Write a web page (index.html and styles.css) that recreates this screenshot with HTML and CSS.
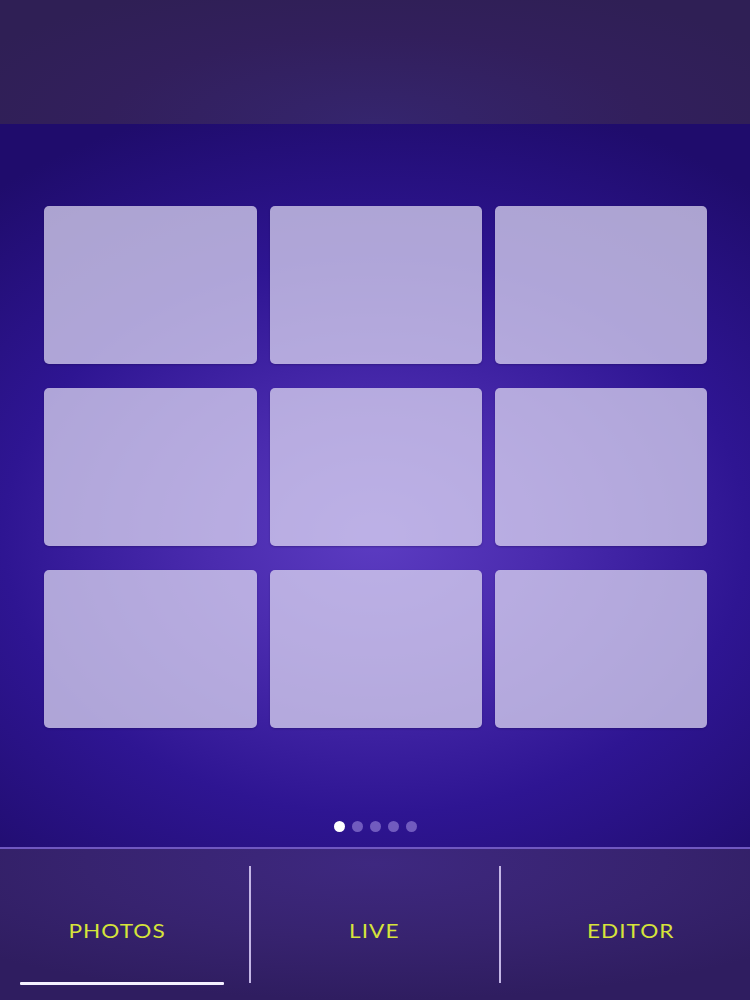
FILE: index.html
```html
<!DOCTYPE html>
<html>
<head>
<meta charset="utf-8">
<link rel="stylesheet" href="styles.css">
</head>
<body>
<div class="app">
  <header class="topbar"></header>
  <main class="stage">
    <div class="grid">
      <div class="tile"></div><div class="tile"></div><div class="tile"></div>
      <div class="tile"></div><div class="tile"></div><div class="tile"></div>
      <div class="tile"></div><div class="tile"></div><div class="tile"></div>
    </div>
    <div class="dots">
      <span class="dot active"></span><span class="dot"></span><span class="dot"></span><span class="dot"></span><span class="dot"></span>
    </div>
  </main>
  <nav class="tabs">
    <div class="tab tab-photos active"><span class="label">PHOTOS</span></div>
    <div class="tab tab-live"><span class="label">LIVE</span></div>
    <div class="tab tab-editor"><span class="label">EDITOR</span></div>
  </nav>
</div>
</body>
</html>
```

FILE: styles.css
```css
* { box-sizing: border-box; }
html, body { margin: 0; padding: 0; }
body { width: 750px; height: 1000px; overflow: hidden; background: #2a1a60; font-family: "Lato", "Noto Sans", sans-serif; }
.app { display: flex; flex-direction: column; width: 750px; height: 1000px; }
.topbar {
  height: 124px; flex: none;
  background: radial-gradient(ellipse 60% 120% at 50% 100%, #35256e 0%, #321f5c 60%, #2f1f55 100%);
}
.stage {
  height: 723px; flex: none;
  display: flex; flex-direction: column; align-items: center;
  background: radial-gradient(ellipse 80% 62% at 50% 57%, #5c3cc2 0%, #4a2bae 28%, #2e1592 62%, #1f0c6c 100%);
  padding-top: 82px;
}
.grid {
  display: grid;
  grid-template-columns: 213px 212px 212px;
  grid-auto-rows: 158px;
  column-gap: 13px;
  row-gap: 24px;
}
.tile {
  background: rgba(226, 222, 244, 0.72);
  border-radius: 5px;
  box-shadow: 0 1px 2px rgba(20, 5, 70, 0.3);
}
.dots { display: flex; gap: 7px; margin-top: 93px; }
.dot { width: 11px; height: 11px; border-radius: 50%; background: rgba(170, 150, 230, 0.55); }
.dot.active { background: #ffffff; }
.tabs {
  flex: 1;
  display: grid;
  grid-template-columns: 249px 250px 251px;
  border-top: 2px solid #7058c0;
  background: radial-gradient(ellipse 70% 90% at 50% 10%, #3e2880 0%, #37236f 55%, #2f1d60 100%);
  padding-top: 17px;
}
.tab {
  position: relative;
  display: flex; align-items: center; justify-content: center;
  height: 117px;
}
.tab-live, .tab-editor { border-left: 2px solid #c4b6e6; }
.label {
  color: #d6e43a;
  font-size: 20px;
  letter-spacing: 0.9px;
  transform: scaleX(1.13);
  position: relative; top: 5px;
}
.tab-photos .label { left: -7px; }
.tab-live .label { left: -1px; }
.tab-editor .label { left: 5px; }
.tab.active::after {
  content: "";
  position: absolute;
  left: 20px; width: 204px; bottom: -2px; height: 3px;
  background: #f4f0ff;
  border-radius: 1px;
}
```
